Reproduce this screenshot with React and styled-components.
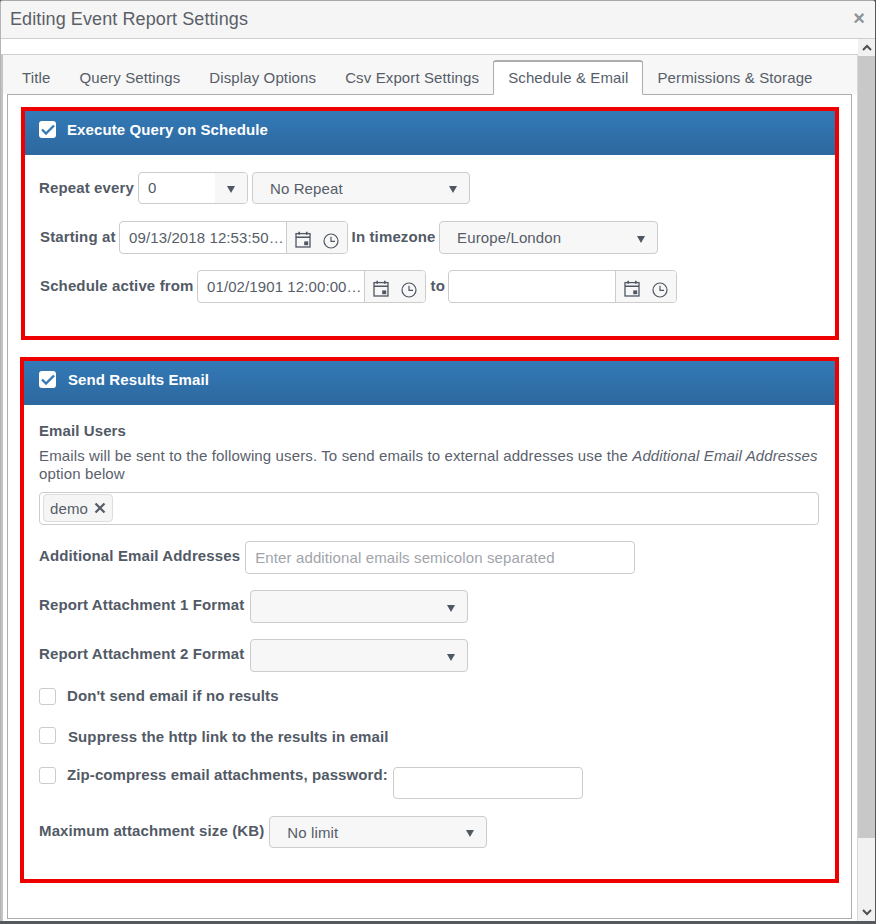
import React from "react";
import styled, { createGlobalStyle } from "styled-components";

const Global = createGlobalStyle`
  html, body {
    margin: 0;
    padding: 0;
    height: 924px;
    overflow: hidden;
    background: #55585c;
    font-family: "Liberation Sans", Arial, sans-serif;
    color: #525a66;
  }
  * { box-sizing: border-box; }
`;

const CalendarIcon = () => (
  <svg width="16" height="17" viewBox="0 0 16 17" fill="none" stroke="#4f5763" strokeWidth="1.3">
    <rect x="1" y="2.6" width="14" height="13.4" />
    <path d="M1 6.2h14" strokeWidth="1.6" />
    <path d="M4.2 0.8v3M11.8 0.8v3" strokeWidth="1.6" />
    <rect x="9.2" y="10.4" width="4" height="3.8" fill="#4f5763" stroke="none" />
  </svg>
);

const ClockIcon = () => (
  <ClockSvg width="16" height="16" viewBox="0 0 16 16" fill="none" stroke="#4f5763" strokeWidth="1.2">
    <circle cx="8" cy="8" r="7" />
    <path d="M8 3.8V8.4H12" />
  </ClockSvg>
);

const Caret = () => <CaretShape />;

const CheckMark = () => (
  <svg width="14" height="11" viewBox="0 0 14 11" fill="none" stroke="#337ab7" strokeWidth="2.4">
    <path d="M1 5.5l4 4L13 1.5" />
  </svg>
);

function Picker({ value, width }) {
  return (
    <PickerBox $width={width}>
      <PickerText>{value}</PickerText>
      <PickerTail>
        <CalendarIcon />
        <ClockIcon />
      </PickerTail>
    </PickerBox>
  );
}

function Select({ value, width, height }) {
  return (
    <SelectBox $width={width} $height={height}>
      <span>{value}</span>
      <Caret />
    </SelectBox>
  );
}

export default function App() {
  const tabs = [
    "Title",
    "Query Settings",
    "Display Options",
    "Csv Export Settings",
    "Schedule & Email",
    "Permissions & Storage",
  ];

  return (
    <>
      <Global />
      <Window>
        <TitleBar>
          <Title>Editing Event Report Settings</Title>
          <CloseBtn>×</CloseBtn>
        </TitleBar>
        <Body>
          <Content>
            <Frame>
              <TabBar>
                {tabs.map((t) => (
                  <Tab key={t} $active={t === "Schedule & Email"}>
                    {t}
                  </Tab>
                ))}
              </TabBar>
              <Pane>
                <Section $height={233} $mb={17}>
                  <SectionHeader>
                    <HeaderCheck>
                      <CheckMark />
                    </HeaderCheck>
                    <HeaderTitle>Execute Query on Schedule</HeaderTitle>
                  </SectionHeader>
                  <SectionBody $top={17}>
                    <Row $mb={17}>
                      <Label $pb={2}>Repeat every</Label>
                      <Combo>
                        <ComboText>0</ComboText>
                        <ComboTail>
                          <Caret />
                        </ComboTail>
                      </Combo>
                      <Select value="No Repeat" width={218} height={32} />
                    </Row>
                    <Row $mb={16} $indent={1} $gap={3.5}>
                      <Label>Starting at</Label>
                      <Picker value="09/13/2018 12:53:50…" width={229} />
                      <Label>In timezone</Label>
                      <Select value="Europe/London" width={219} />
                    </Row>
                    <Row $indent={1} $gap={3.5}>
                      <Label>Schedule active from</Label>
                      <Picker value="01/02/1901 12:00:00…" width={229} />
                      <Label $pl={1}>to</Label>
                      <Picker value="" width={229} />
                    </Row>
                  </SectionBody>
                </Section>

                <Section $height={526} $mb={0} $wide>
                  <SectionHeader $wide>
                    <HeaderCheck>
                      <CheckMark />
                    </HeaderCheck>
                    <HeaderTitle $gap={1}>Send Results Email</HeaderTitle>
                  </SectionHeader>
                  <SectionBody $wide>
                    <Heading>Email Users</Heading>
                    <Help>
                      Emails will be sent to the following users. To send emails to external addresses use
                      the <em>Additional Email Addresses</em> option below
                    </Help>
                    <TagInput>
                      <Tag>
                        demo
                        <svg width="12" height="12" viewBox="0 0 12 12" fill="none" stroke="#565d68" strokeWidth="2.2">
                          <path d="M1.5 1.5l9 9M10.5 1.5l-9 9" />
                        </svg>
                      </Tag>
                    </TagInput>
                    <Row $mb={16} $gap={5}>
                      <Label $pb={4}>Additional Email Addresses</Label>
                      <TextInput $width={390} $height={33}>
                        <Placeholder>Enter additional emails semicolon separated</Placeholder>
                      </TextInput>
                    </Row>
                    <Row $mb={16} $gap={6}>
                      <Label $pb={4}>Report Attachment 1 Format</Label>
                      <Select value="" width={218} />
                    </Row>
                    <Row $mb={16} $gap={6}>
                      <Label $pb={4}>Report Attachment 2 Format</Label>
                      <Select value="" width={218} />
                    </Row>
                    <CheckRow $height={17} $mb={22}>
                      <Box />
                      <CheckLabel>Don't send email if no results</CheckLabel>
                    </CheckRow>
                    <CheckRow $height={17} $mb={23}>
                      <Box />
                      <CheckLabel $shift={1} $drop={2}>
                        Suppress the http link to the results in email
                      </CheckLabel>
                    </CheckRow>
                    <CheckRow $height={32} $mb={17}>
                      <Box />
                      <CheckLabel>Zip-compress email attachments, password:</CheckLabel>
                      <TextInput $width={190} $height={32} />
                    </CheckRow>
                    <Row $gap={5}>
                      <Label $pb={4}>Maximum attachment size (KB)</Label>
                      <Select value="No limit" width={218} height={32} />
                    </Row>
                  </SectionBody>
                </Section>
              </Pane>
            </Frame>
          </Content>
          <Scrollbar>
            <ScrollBtn>
              <svg width="10" height="7" viewBox="0 0 10 7" fill="none" stroke="#505050" strokeWidth="2">
                <path d="M1 6l4-4 4 4" />
              </svg>
            </ScrollBtn>
            <Thumb />
            <Track />
            <ScrollBtn>
              <svg width="10" height="7" viewBox="0 0 10 7" fill="none" stroke="#505050" strokeWidth="2">
                <path d="M1 1l4 4 4-4" />
              </svg>
            </ScrollBtn>
          </Scrollbar>
        </Body>
      </Window>
    </>
  );
}

const Window = styled.div`
  width: 875px;
  height: 921px;
  background: #fff;
  border-top: 1px solid #a9a9a9;
  border-left: 1px solid #b5b5b5;
  border-radius: 3px 3px 0 0;
  display: flex;
  flex-direction: column;
  overflow: hidden;
`;

const TitleBar = styled.div`
  height: 38px;
  flex: none;
  background: #f5f5f5;
  border-bottom: 1px solid #cfcfcf;
  display: flex;
  align-items: center;
  justify-content: space-between;
  padding: 0 10px 0 9px;
`;

const Title = styled.div`
  font-size: 18px;
  letter-spacing: 0.1px;
  color: #5a5f68;
`;

const CloseBtn = styled.div`
  font-size: 20px;
  font-weight: bold;
  line-height: 20px;
  padding-bottom: 4px;
  color: #8e939a;
`;

const Body = styled.div`
  flex: 1;
  min-height: 0;
  display: flex;
`;

const Content = styled.div`
  width: 857px;
  flex: none;
  padding-top: 15px;
  display: flex;
  flex-direction: column;
`;

const Frame = styled.div`
  flex: 1;
  min-height: 0;
  display: flex;
  flex-direction: column;
  border-top: 1px solid #cfcfcf;
  border-left: 2px solid #c4c4c4;
  border-right: 1px solid #d8d8d8;
`;

const TabBar = styled.div`
  height: 39px;
  flex: none;
  background: #f7f7f7;
  padding: 5px 0 0 4.5px;
  display: flex;
  align-items: flex-end;
`;

const Tab = styled.div`
  height: 35px;
  margin: ${(p) => (p.$active ? "0 -0.5px -1px" : "0 0 -1px")};
  padding: 0 ${(p) => (p.$active ? 14 : 13.5)}px;
  font-size: 15px;
  letter-spacing: 0.12px;
  line-height: ${(p) => (p.$active ? 32 : 33)}px;
  position: relative;
  color: #565d68;
  background: ${(p) => (p.$active ? "#fff" : "transparent")};
  border: 1px solid ${(p) => (p.$active ? "#adadad" : "transparent")};
  border-top-width: ${(p) => (p.$active ? 2 : 1)}px;
  border-bottom: ${(p) => (p.$active ? "1px solid #fff" : "none")};
  border-radius: 3px 3px 0 0;
  z-index: 1;
`;

const Pane = styled.div`
  flex: 1;
  min-height: 0;
  margin: 0 5px 2px 4px;
  padding: 12px 12px 0 13px;
  border: 1px solid #adadad;
  background: #fff;
`;

const Section = styled.div`
  height: ${(p) => p.$height}px;
  margin-bottom: ${(p) => p.$mb}px;
  margin-left: ${(p) => (p.$wide ? -1 : 0)}px;
  width: ${(p) => (p.$wide ? 819 : 818)}px;
  border: 4px solid #ee0000;
  background: #fff;
`;

const SectionHeader = styled.div`
  height: 44px;
  padding: 0 0 6px ${(p) => (p.$wide ? 15 : 14)}px;
  display: flex;
  align-items: center;
  background: linear-gradient(to bottom, #337ab7, #2d689f);
  border-bottom: 1px solid #2e6da4;
`;

const HeaderCheck = styled.div`
  width: 17px;
  height: 17px;
  border-radius: 3px;
  background: #fff;
  display: flex;
  align-items: center;
  justify-content: center;
`;

const HeaderTitle = styled.div`
  margin-left: ${(p) => 11 + (p.$gap || 0)}px;
  font-size: 15px;
  font-weight: bold;
  letter-spacing: 0.1px;
  color: #fff;
`;

const SectionBody = styled.div`
  padding: ${(p) => p.$top || 16}px 14px 0 ${(p) => (p.$wide ? 15 : 14)}px;
`;

const Row = styled.div`
  display: flex;
  align-items: center;
  gap: ${(p) => p.$gap || 4}px;
  margin-bottom: ${(p) => p.$mb || 0}px;
  padding-left: ${(p) => p.$indent || 0}px;
`;

const Label = styled.div`
  font-size: 15px;
  font-weight: bold;
  letter-spacing: 0.13px;
  white-space: nowrap;
  color: #525a66;
  padding-bottom: ${(p) => (p.$pb === undefined ? 3 : p.$pb)}px;
  padding-left: ${(p) => p.$pl || 0}px;
`;

const Combo = styled.div`
  width: 110px;
  height: 32px;
  display: flex;
  border: 1px solid #ccc;
  border-radius: 4px;
  overflow: hidden;
  font-size: 15px;
`;

const ComboText = styled.div`
  flex: 1;
  padding: 6px 0 0 9px;
`;

const ComboTail = styled.div`
  width: 32px;
  background: #f7f7f7;
  display: flex;
  align-items: center;
  justify-content: center;
`;

const CaretShape = styled.span`
  display: block;
  width: 0;
  height: 0;
  margin-top: 3px;
  border-left: 4.5px solid transparent;
  border-right: 4.5px solid transparent;
  border-top: 7px solid #4f5763;
`;

const SelectBox = styled.div`
  width: ${(p) => p.$width}px;
  height: ${(p) => p.$height || 33}px;
  padding: 0 12px 0 17px;
  display: flex;
  align-items: center;
  justify-content: space-between;
  background: #f7f7f7;
  border: 1px solid #ccc;
  border-radius: 4px;
  font-size: 15px;
  letter-spacing: 0.12px;
  color: #565d68;
`;

const PickerBox = styled.div`
  width: ${(p) => p.$width}px;
  height: 33px;
  display: flex;
  border: 1px solid #ccc;
  border-radius: 4px;
  overflow: hidden;
`;

const PickerText = styled.div`
  flex: 1;
  min-width: 0;
  padding: 7px 0 0 9px;
  font-size: 15px;
  letter-spacing: 0.1px;
  line-height: 17px;
  white-space: nowrap;
  color: #565d68;
`;

const PickerTail = styled.div`
  width: 61px;
  flex: none;
  background: #f7f7f7;
  border-left: 1px solid #ccc;
  padding: 4px 8px 0;
  display: flex;
  align-items: center;
  justify-content: space-between;
`;

const ClockSvg = styled.svg`
  margin-top: 2px;
`;

const Heading = styled.div`
  margin-top: 1px;
  font-size: 15px;
  font-weight: bold;
  letter-spacing: 0.1px;
`;

const Help = styled.div`
  margin-top: 8px;
  font-size: 15px;
  letter-spacing: 0.13px;
  line-height: 18px;
  color: #5a616c;
  em {
    font-style: italic;
  }
`;

const TagInput = styled.div`
  height: 33px;
  width: 780px;
  margin: 9px 0 16px;
  padding: 1px 3px;
  border: 1px solid #ccc;
  border-radius: 4px;
`;

const Tag = styled.div`
  display: inline-flex;
  align-items: center;
  gap: 6px;
  height: 28px;
  padding: 0 6px;
  background: #f5f5f5;
  border: 1px solid #ddd;
  border-radius: 4px;
  font-size: 15px;
  letter-spacing: 0.12px;
  color: #565d68;
`;

const TextInput = styled.div`
  width: ${(p) => p.$width}px;
  height: ${(p) => p.$height}px;
  padding: 0 9px;
  display: flex;
  align-items: center;
  flex: none;
  border: 1px solid #ccc;
  border-radius: 4px;
  background: #fff;
`;

const Placeholder = styled.span`
  font-size: 15px;
  letter-spacing: 0.12px;
  color: #a0a4aa;
  white-space: nowrap;
`;

const CheckRow = styled.div`
  height: ${(p) => p.$height}px;
  margin-bottom: ${(p) => p.$mb}px;
  display: flex;
  align-items: flex-start;
`;

const Box = styled.div`
  width: 17px;
  height: 17px;
  flex: none;
  border: 1px solid #ccc;
  border-radius: 3px;
  background: #fff;
`;

const CheckLabel = styled.div`
  margin: ${(p) => p.$drop || 0}px 5px 0 ${(p) => 11 + (p.$shift || 0)}px;
  font-size: 15px;
  letter-spacing: 0.1px;
  line-height: 16px;
  font-weight: bold;
  white-space: nowrap;
`;

const Scrollbar = styled.div`
  width: 17px;
  flex: none;
  background: #f1f1f1;
  display: flex;
  flex-direction: column;
`;

const ScrollBtn = styled.div`
  height: 17px;
  flex: none;
  display: flex;
  align-items: center;
  justify-content: center;
`;

const Thumb = styled.div`
  height: 782px;
  flex: none;
  background: #c8c8c8;
`;

const Track = styled.div`
  flex: 1;
`;
